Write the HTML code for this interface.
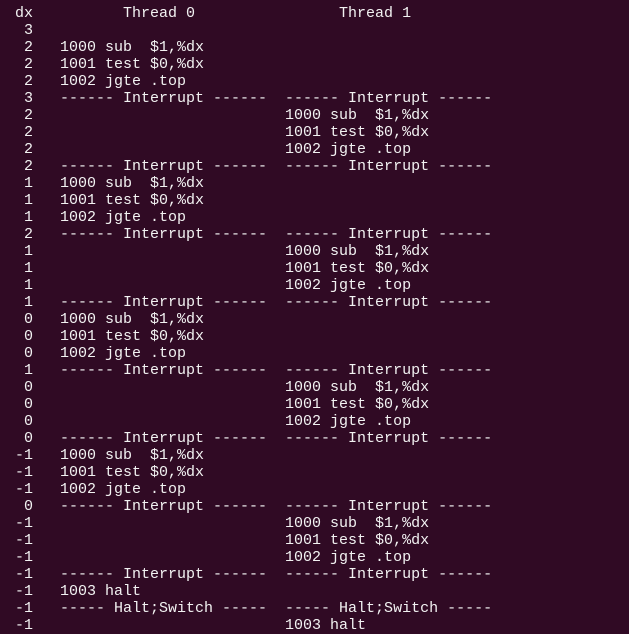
<!DOCTYPE html>
<html><head><meta charset="utf-8"><style>
html,body{margin:0;padding:0;background:#300a24;width:629px;height:634px;overflow:hidden}
pre{margin:0;position:absolute;left:6px;top:5px;font-family:"Liberation Mono",monospace;font-size:15px;line-height:17px;color:#f2f2f2}
</style></head><body><pre> dx          Thread 0                Thread 1
  3
  2   1000 sub  $1,%dx
  2   1001 test $0,%dx
  2   1002 jgte .top
  3   ------ Interrupt ------  ------ Interrupt ------
  2                            1000 sub  $1,%dx
  2                            1001 test $0,%dx
  2                            1002 jgte .top
  2   ------ Interrupt ------  ------ Interrupt ------
  1   1000 sub  $1,%dx
  1   1001 test $0,%dx
  1   1002 jgte .top
  2   ------ Interrupt ------  ------ Interrupt ------
  1                            1000 sub  $1,%dx
  1                            1001 test $0,%dx
  1                            1002 jgte .top
  1   ------ Interrupt ------  ------ Interrupt ------
  0   1000 sub  $1,%dx
  0   1001 test $0,%dx
  0   1002 jgte .top
  1   ------ Interrupt ------  ------ Interrupt ------
  0                            1000 sub  $1,%dx
  0                            1001 test $0,%dx
  0                            1002 jgte .top
  0   ------ Interrupt ------  ------ Interrupt ------
 -1   1000 sub  $1,%dx
 -1   1001 test $0,%dx
 -1   1002 jgte .top
  0   ------ Interrupt ------  ------ Interrupt ------
 -1                            1000 sub  $1,%dx
 -1                            1001 test $0,%dx
 -1                            1002 jgte .top
 -1   ------ Interrupt ------  ------ Interrupt ------
 -1   1003 halt
 -1   ----- Halt;Switch -----  ----- Halt;Switch -----
 -1                            1003 halt</pre></body></html>
